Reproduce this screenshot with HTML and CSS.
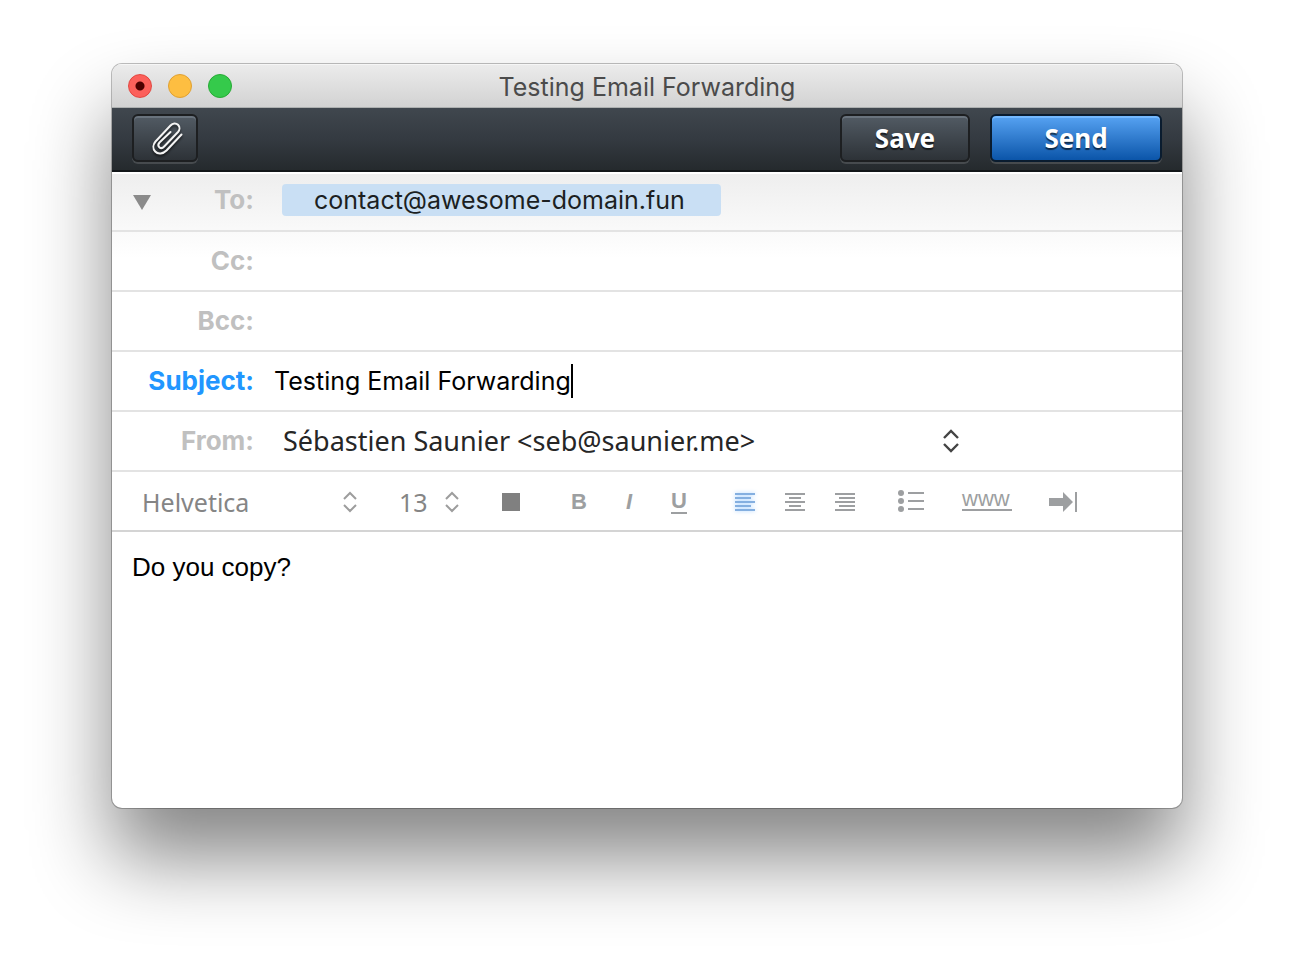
FILE: index.html
```html
<!DOCTYPE html>
<html lang="en">
<head>
<meta charset="utf-8">
<title>Testing Email Forwarding</title>
<link rel="stylesheet" href="styles.css">
</head>
<body>
<form class="window">
  <header class="titlebar">
    <div class="lights">
      <button type="button" class="light light-close" aria-label="Close"></button>
      <button type="button" class="light light-minimize" aria-label="Minimize"></button>
      <button type="button" class="light light-zoom" aria-label="Zoom"></button>
    </div>
    <h1 class="title">Testing Email Forwarding</h1>
  </header>

  <div class="toolbar">
    <button type="button" class="button button-attach" aria-label="Attach file">
      <svg class="clip" width="31" height="33" viewBox="0 0 31 33" fill="none" stroke="#f4f4f4" stroke-width="2" stroke-linecap="round" stroke-linejoin="round">
        <path d="M29.500 12.500L14.500 28.500C11 32 6 32.500 3.200 29.500C0.500 26.500 1 22.500 3.500 19.500L18.500 3.500C20.800 1 24 0.800 26 2.800C28.200 5 27.800 8 26 10L12.200 24.500C10.600 26.200 8.600 26.400 7.300 25.200C6 24 6.200 22 7.500 20.500L18.500 10"/>
      </svg>
    </button>
    <button type="button" class="button button-save">Save</button>
    <button type="submit" class="button button-send">Send</button>
  </div>

  <div class="fields">
    <div class="row">
      <button type="button" class="disclosure" aria-label="Hide Cc and Bcc">
        <svg width="18" height="15" viewBox="0 0 18 15"><path d="M0 0H18L9 15Z" fill="#8b8b8b"/></svg>
      </button>
      <span class="label label-short">To:</span>
      <div class="value"><span class="token">contact@awesome-domain.fun</span></div>
    </div>
    <div class="row">
      <label class="label" for="cc">Cc:</label>
      <div class="value"><input class="input" id="cc" type="text"></div>
    </div>
    <div class="row">
      <label class="label" for="bcc">Bcc:</label>
      <div class="value"><input class="input" id="bcc" type="text"></div>
    </div>
    <div class="row">
      <label class="label label-active" for="subject">Subject:</label>
      <div class="value"><input class="input input-subject" id="subject" type="text" value="Testing Email Forwarding"><span class="caret"></span></div>
    </div>
    <div class="row">
      <label class="label" for="from">From:</label>
      <div class="value">
        <div class="picker picker-from">
          <select class="select" id="from"><option>Sébastien Saunier &lt;seb@saunier.me&gt;</option></select>
          <svg class="chevrons" width="18" height="26" viewBox="0 0 18 26" fill="none" stroke="#444" stroke-width="2.400"><path d="M2 10L9 3L16 10M2 16L9 23L16 16"/></svg>
        </div>
      </div>
    </div>
  </div>

  <div class="format">
    <div class="picker picker-font">
      <select class="select" aria-label="Font"><option>Helvetica</option></select>
      <svg class="chevrons" width="16" height="22" viewBox="0 0 16 22" fill="none" stroke="#9d9d9d" stroke-width="2"><path d="M2 8L8 2L14 8M2 14L8 20L14 14"/></svg>
    </div>
    <div class="picker picker-size">
      <select class="select" aria-label="Font size"><option>13</option></select>
      <svg class="chevrons" width="16" height="22" viewBox="0 0 16 22" fill="none" stroke="#9d9d9d" stroke-width="2"><path d="M2 8L8 2L14 8M2 14L8 20L14 14"/></svg>
    </div>
    <button type="button" class="tool" aria-label="Text colour"><span class="swatch"></span></button>
    <div class="group">
      <button type="button" class="tool tool-text" aria-label="Bold">B</button>
      <button type="button" class="tool tool-text tool-italic" aria-label="Italic">I</button>
      <button type="button" class="tool tool-text" aria-label="Underline"><span class="underlined">U</span></button>
    </div>
    <div class="group">
      <button type="button" class="tool tool-on" aria-label="Align left">
        <svg width="20" height="18" viewBox="0 0 20 18" fill="currentColor"><path d="M0 0H20V2H0ZM0 4H16V6H0ZM0 8H20V10H0ZM0 12H16V14H0ZM0 16H20V18H0Z"/></svg>
      </button>
      <button type="button" class="tool" aria-label="Align center">
        <svg width="20" height="18" viewBox="0 0 20 18" fill="currentColor"><path d="M0 0H20V2H0ZM4 4H16V6H4ZM0 8H20V10H0ZM4 12H16V14H4ZM0 16H20V18H0Z"/></svg>
      </button>
      <button type="button" class="tool" aria-label="Align right">
        <svg width="20" height="18" viewBox="0 0 20 18" fill="currentColor"><path d="M0 0H20V2H0ZM4 4H20V6H4ZM0 8H20V10H0ZM4 12H20V14H4ZM0 16H20V18H0Z"/></svg>
      </button>
    </div>
    <div class="group">
      <button type="button" class="tool" aria-label="List">
        <svg width="26" height="26" viewBox="0 0 26 26" fill="currentColor"><circle cx="3" cy="4" r="3"/><circle cx="3" cy="12" r="3"/><circle cx="3" cy="20" r="3"/><path d="M10 3H26V5H10ZM10 11H26V13H10ZM10 19H26V21H10Z"/></svg>
      </button>
      <button type="button" class="tool tool-link"><span class="link-text">www</span></button>
      <button type="button" class="tool" aria-label="Indent">
        <svg width="28" height="20" viewBox="0 0 28 20" fill="currentColor"><path d="M0 6H14V0L24 10L14 20V14H0ZM26 0H28V20H26Z"/></svg>
      </button>
    </div>
  </div>

  <textarea class="message" aria-label="Message">Do you copy?</textarea>
</form>
</body>
</html>
```

FILE: styles.css
```css
* {
  box-sizing: border-box;
}

body {
  margin: 0;
  min-height: 100vh;
  display: flex;
  padding: 64px 112px 160px;
  background: #fff;
  font-family: Inter, "Liberation Sans", sans-serif;
  font-size: 26px;
  line-height: 32px;
}

button,
input,
select,
textarea {
  margin: 0;
  padding: 0;
  border: 0;
  outline: 0;
  background: none;
  font: inherit;
  color: inherit;
}

svg {
  display: block;
}

.window {
  flex: 1;
  min-width: 0;
  display: flex;
  flex-direction: column;
  border-radius: 10px;
  overflow: hidden;
  background: #fff;
  box-shadow: 0 0 0 1px rgba(0, 0, 0, 0.25), 0 50px 80px rgba(0, 0, 0, 0.48);
}

.titlebar {
  display: grid;
  grid-template-columns: 1fr auto 1fr;
  align-items: center;
  height: 44px;
  padding: 0 16px;
  border-bottom: 1px solid #adb0b0;
  background: linear-gradient(#ececec, #d2d2d2);
  box-shadow: inset 0 1px #f6f6f6;
}

.lights {
  display: flex;
  gap: 16px;
}

.light {
  width: 24px;
  height: 24px;
  border-radius: 50%;
}

.light-close {
  border: 1px solid #e2463f;
  background: radial-gradient(circle, #4d0000 0 4px, #fc605b 5px);
}

.light-minimize {
  border: 1px solid #dfa033;
  background: #fdbe41;
}

.light-zoom {
  border: 1px solid #27aa35;
  background: #35ca4b;
}

.title {
  margin: 0;
  padding-top: 2px;
  font-size: 25px;
  font-weight: 400;
  color: #4b4b4b;
}

.toolbar {
  display: flex;
  gap: 20px;
  padding: 6px 20px 8px;
  border-bottom: 2px solid #121619;
  background: linear-gradient(#40474e, #343a41 50%, #252a2d);
}

.button {
  display: flex;
  align-items: center;
  justify-content: center;
  height: 48px;
  border: 2px solid #1d1f21;
  border-radius: 6px;
  background: linear-gradient(#525b64, #2d3237);
  box-shadow: inset 0 2px #69737d, 0 2px rgba(255, 255, 255, 0.14);
  font-family: "Noto Sans", "Open Sans", sans-serif;
  font-weight: 700;
  color: #fff;
  text-shadow: 0 2px 1px rgba(0, 0, 0, 0.6);
}

.button-attach {
  width: 66px;
  margin-right: auto;
  padding-left: 4px;
}

.clip {
  filter: drop-shadow(0 2px 1px rgba(0, 0, 0, 0.6));
}

.button-save {
  width: 130px;
}

.button-send {
  width: 172px;
  border-color: #0a1c2f;
  background: linear-gradient(#57a3f3, #0b55a9);
  box-shadow: inset 0 2px #74b9ff, 0 2px rgba(255, 255, 255, 0.14);
}

.fields {
  border-top: 2px solid #fff;
  background: linear-gradient(#eee, #fff 84px);
}

.row {
  display: grid;
  grid-template-columns: 40px 102px 1fr;
  align-items: center;
  height: 60px;
  border-bottom: 2px solid #e3e3e3;
}

.row:first-child {
  height: 58px;
  padding-bottom: 4px;
}

.disclosure {
  justify-self: end;
  padding: 4px 1px 0 0;
}

.label {
  grid-column: 1 / 3;
  text-align: right;
  font-weight: 700;
  color: #c0c0c0;
}

.label-short {
  grid-column: 2;
}

.label-active {
  color: #2196ff;
}

.value {
  display: flex;
  align-items: center;
  min-width: 0;
  padding-left: 20px;
}

.token {
  margin-left: 8px;
  padding: 0 36px 0 32px;
  border-radius: 4px;
  background: #c9dff4;
  font-size: 25px;
  color: #1c1f22;
}

.input {
  flex: 1;
  min-width: 0;
  height: 34px;
}

.input-subject {
  flex: none;
  field-sizing: content;
  font-size: 25px;
  color: #000;
}

.caret {
  width: 2px;
  height: 34px;
  background: #000;
}

.picker {
  display: grid;
  grid-template-columns: 1fr auto;
  align-items: center;
  font-family: "Noto Sans", "Open Sans", sans-serif;
}

.select {
  grid-area: 1 / 1 / 2 / 3;
  appearance: none;
}

.chevrons {
  grid-area: 1 / 2;
  pointer-events: none;
}

.picker-from {
  flex: 0 1 677px;
  margin-left: 9px;
  font-size: 27px;
  color: #262626;
}

.format {
  display: flex;
  align-items: center;
  min-height: 60px;
  padding: 2px 0 0 30px;
  border-bottom: 2px solid #d4d4d4;
  color: #9d9fa1;
}

.picker-font,
.picker-size {
  font-size: 25px;
  color: #858585;
}

.picker-font {
  width: 216px;
  margin-right: 41px;
}

.picker-size {
  width: 61px;
  margin-right: 26px;
}

.group {
  display: flex;
  margin-left: 18px;
}

.group + .group {
  margin-left: 16px;
}

.tool {
  display: flex;
  align-items: center;
  justify-content: center;
  width: 50px;
  height: 32px;
}

.tool-text {
  font-family: "Liberation Sans", sans-serif;
  font-size: 22px;
  font-weight: 700;
}

.tool-italic {
  font-style: italic;
}

.underlined {
  border-bottom: 2px solid;
  line-height: 22px;
}

.tool-on {
  color: #84afe0;
  filter: drop-shadow(0 0 2px #a9d2ff);
}

.tool-link {
  width: 102px;
}

.link-text {
  width: 50px;
  margin-bottom: 4px;
  border-bottom: 2px solid;
  font-family: "Liberation Sans", sans-serif;
  font-size: 22px;
  line-height: 20px;
  text-align: left;
}

.swatch {
  width: 18px;
  height: 18px;
  background: #808080;
}

.message {
  flex: 1;
  padding: 20px;
  resize: none;
  font-family: "Liberation Sans", sans-serif;
  line-height: 30px;
  color: #000;
}
```
